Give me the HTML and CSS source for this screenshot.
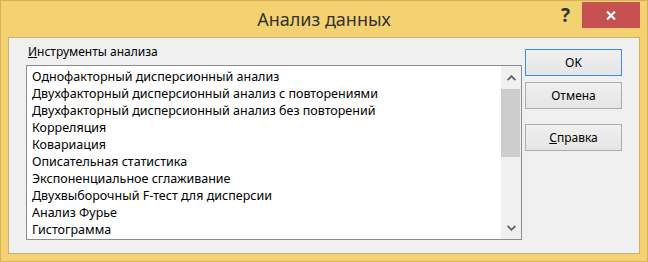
FILE: index.html
```html
<!DOCTYPE html>
<html lang="ru">
<head>
    <meta charset="UTF-8">
    <title>Анализ данных</title>
    <link rel="stylesheet" href="styles.css">
</head>
<body>
    <div class="window">
        <div class="titlebar">
            <div></div>
            <div class="title">Анализ данных</div>
            <div class="controls">
                <span class="help">?</span>
                <span class="close">
                    <svg width="10" height="9" viewBox="0 0 10 9">
                        <path d="M1 0.5 L9 8.5 M9 0.5 L1 8.5" stroke="#ffffff" stroke-width="2.2" fill="none"/>
                    </svg>
                </span>
            </div>
        </div>

        <div class="client">
            <div class="tools">
                <div class="label"><u>И</u>нструменты анализа</div>
                <div class="listbox">
                    <ul class="items">
                        <li>Однофакторный дисперсионный анализ</li>
                        <li>Двухфакторный дисперсионный анализ с повторениями</li>
                        <li>Двухфакторный дисперсионный анализ без повторений</li>
                        <li>Корреляция</li>
                        <li>Ковариация</li>
                        <li>Описательная статистика</li>
                        <li>Экспоненциальное сглаживание</li>
                        <li>Двухвыборочный F-тест для дисперсии</li>
                        <li>Анализ Фурье</li>
                        <li>Гистограмма</li>
                    </ul>
                    <div class="scrollbar">
                        <div class="arrow">
                            <svg width="9" height="6" viewBox="0 0 9 6">
                                <polyline points="0.6,5.2 4.5,1.2 8.4,5.2" stroke="#606060" stroke-width="1.8" fill="none"/>
                            </svg>
                        </div>
                        <div class="track"><div class="thumb"></div></div>
                        <div class="arrow">
                            <svg width="9" height="6" viewBox="0 0 9 6">
                                <polyline points="0.6,0.8 4.5,4.8 8.4,0.8" stroke="#606060" stroke-width="1.8" fill="none"/>
                            </svg>
                        </div>
                    </div>
                </div>
            </div>

            <div class="buttons">
                <button class="default">OK</button>
                <button>Отмена</button>
                <button class="spaced"><u>С</u>правка</button>
            </div>
        </div>
    </div>
</body>
</html>
```

FILE: styles.css
```css
* {
    margin: 0;
    padding: 0;
    box-sizing: border-box;
}

body {
    font-family: 'Noto Sans', 'Liberation Sans', sans-serif;
    font-size: 12px;
    color: #000000;
    background-color: #f5d271;
}

.window {
    width: 648px;
    height: 262px;
    border: 1px solid #d6b157;
    background-color: #f5d271;
    padding: 0 7px 7px 7px;
    display: flex;
    flex-direction: column;
}

.titlebar {
    height: 36px;
    display: grid;
    grid-template-columns: 1fr auto 1fr;
    align-items: start;
}

.title {
    font-size: 18px;
    color: #333333;
    line-height: 36px;
}

.controls {
    justify-self: end;
    display: flex;
    align-items: flex-start;
    gap: 12px;
}

.help {
    font-size: 19px;
    font-weight: bold;
    color: #333333;
    line-height: 28px;
}

.close {
    width: 58px;
    height: 26px;
    margin-top: 1px;
    background-color: #c75050;
    display: flex;
    justify-content: center;
    align-items: center;
}

.client {
    flex: 1;
    background-color: #f0f0f0;
    border: 1px solid #c9b172;
    padding: 6px 17px 0 17px;
    display: flex;
    gap: 3px;
}

.tools {
    width: 496px;
}

.label {
    line-height: 16px;
    padding-left: 2px;
    margin-bottom: 5px;
}

.listbox {
    height: 175px;
    border: 1px solid #8c8c8c;
    background-color: #ffffff;
    display: flex;
}

.items {
    flex: 1;
    list-style: none;
    padding: 2px 0 0 5px;
    font-size: 12.5px;
}

.items li {
    line-height: 17px;
    white-space: nowrap;
}

.scrollbar {
    width: 20px;
    background-color: #f0f0f0;
    display: flex;
    flex-direction: column;
}

.arrow {
    height: 23px;
    display: flex;
    justify-content: center;
    align-items: center;
}

.track {
    flex: 1;
}

.thumb {
    width: 19px;
    height: 68px;
    background-color: #cdcdcd;
}

.buttons {
    width: 97px;
    padding-top: 5px;
    display: flex;
    flex-direction: column;
    gap: 6px;
}

button {
    height: 27px;
    font-family: inherit;
    font-size: 12px;
    color: #000000;
    border: 1px solid #acacac;
    background: linear-gradient(#f0f0f0, #e5e5e5);
}

button.default {
    border-color: #3d8ee0;
}

button.spaced {
    margin-top: 9px;
}
```
